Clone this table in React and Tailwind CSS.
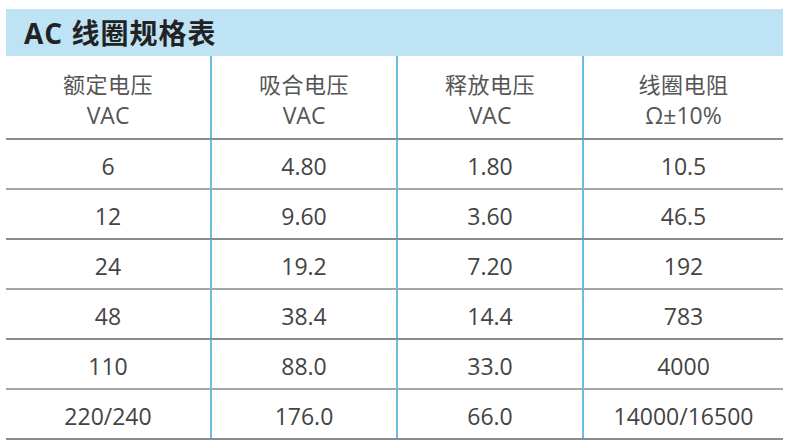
import React from 'react';

const cols = ['w-[206px]', 'w-[186px]', 'w-[186px]', 'w-[199px]'];

const head = [
  ['额定电压', 'VAC'],
  ['吸合电压', 'VAC'],
  ['释放电压', 'VAC'],
  ['线圈电阻', 'Ω±10%'],
];

const rows = [
  ['6', '4.80', '1.80', '10.5'],
  ['12', '9.60', '3.60', '46.5'],
  ['24', '19.2', '7.20', '192'],
  ['48', '38.4', '14.4', '783'],
  ['110', '88.0', '33.0', '4000'],
  ['220/240', '176.0', '66.0', '14000/16500'],
];

const font = { fontFamily: '"Open Sans", "Noto Sans CJK SC", sans-serif' };

const App = () => {
  return (
    <div className="w-[790px] h-[447px] bg-white pl-[6px] pt-[9px] overflow-hidden" style={font}>
      <div className="w-[777px]">
        {/* Title band */}
        <div className="h-[47px] bg-[#bee3f5] flex items-center pl-[18px] pt-[1px]">
          <span className="text-[28px] font-bold text-[#222] leading-none tracking-[1px]">AC 线圈规格表</span>
        </div>

        {/* Header row */}
        <div className="flex h-[84px] border-b-2 border-[#8c8c8c]">
          {head.map((h, i) => (
            <div
              key={i}
              className={`${cols[i]} flex flex-col items-center justify-center text-[#555] text-[22px] leading-[31px] pt-[5px] ${i < 3 ? 'border-r-2 border-[#6bbde4]' : ''}`}
            >
              <span className="tracking-[0.5px]">{h[0]}</span>
              <span className="text-[23px]">{h[1]}</span>
            </div>
          ))}
        </div>

        {/* Data rows */}
        {rows.map((r, ri) => (
          <div key={ri} className={`flex h-[50px] border-b-2 ${ri % 2 === 0 ? 'border-[#a6a6a6]' : 'border-[#8c8c8c]'}`}>
            {r.map((v, i) => (
              <div
                key={i}
                className={`${cols[i]} flex items-center justify-center text-[#444] text-[23px] pt-[4px] ${i < 3 ? 'border-r-2 border-[#6bbde4]' : ''}`}
              >
                {v}
              </div>
            ))}
          </div>
        ))}
      </div>
    </div>
  );
};

export default App;
